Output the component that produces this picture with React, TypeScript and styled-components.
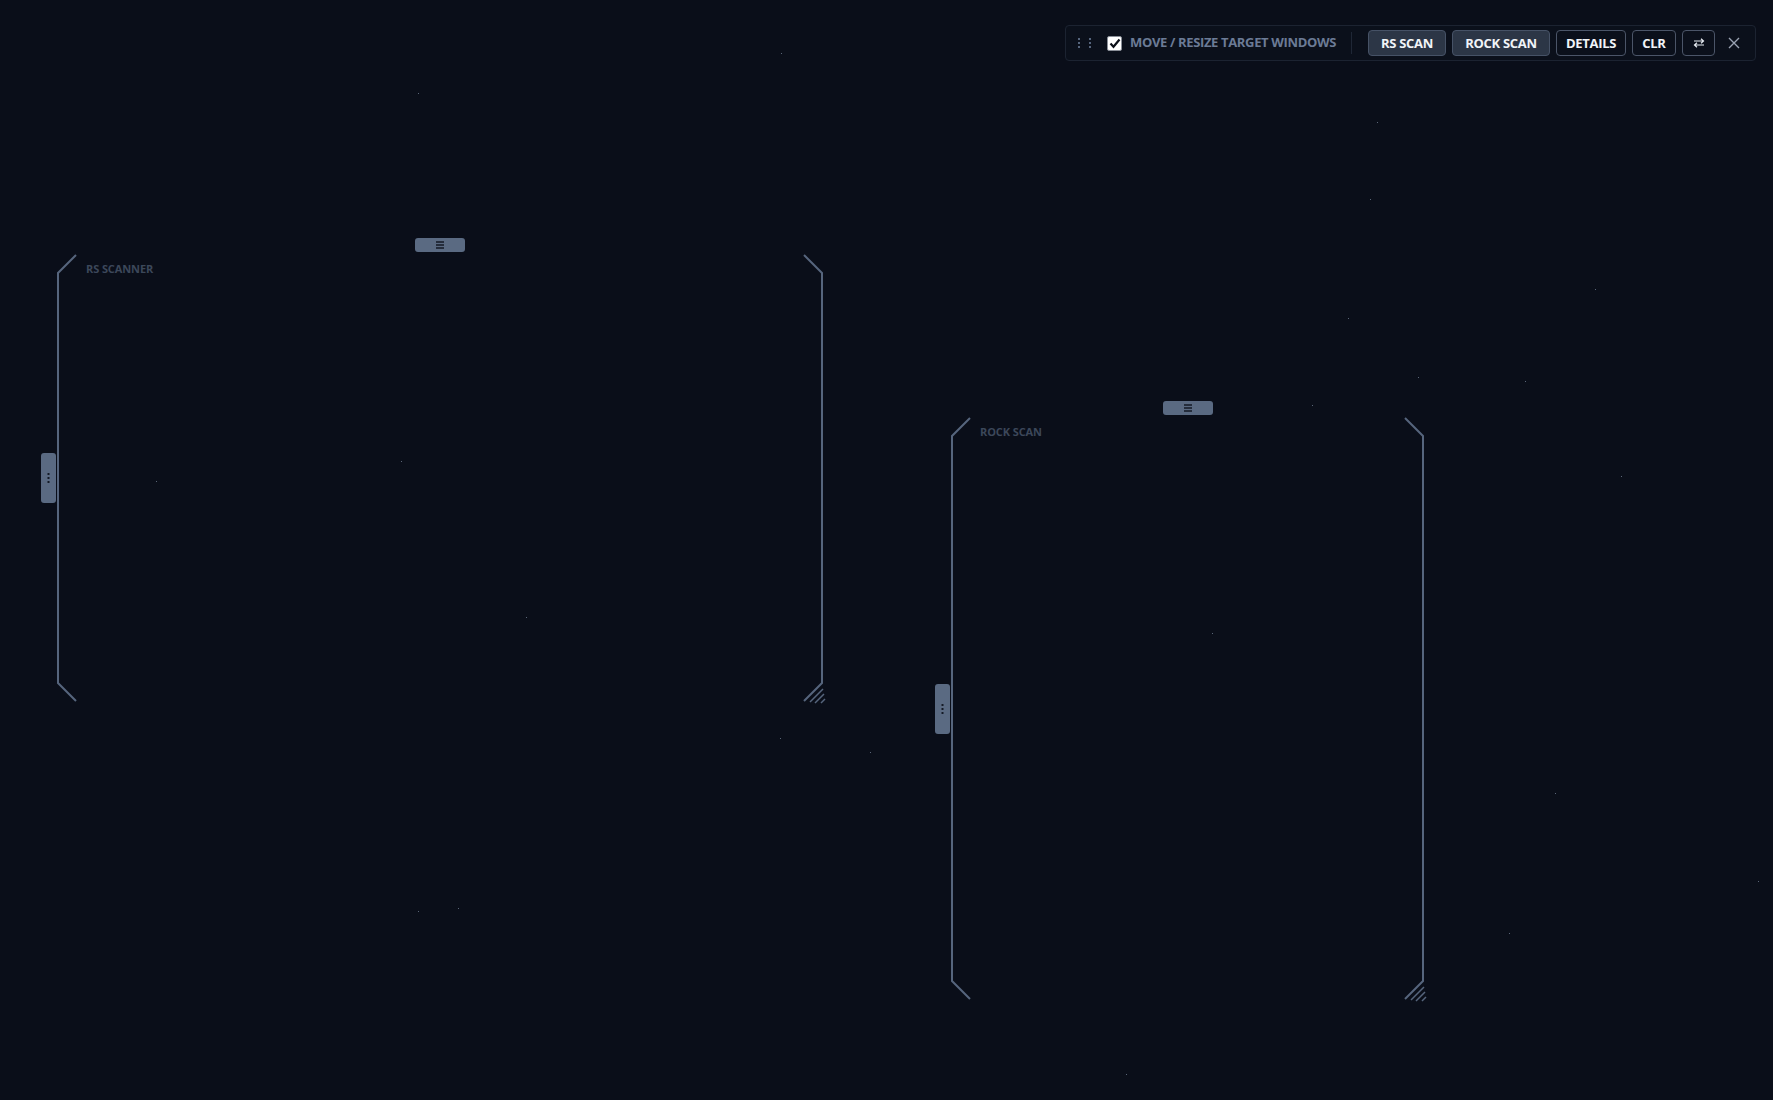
import React from "react";
import styled, { createGlobalStyle } from "styled-components";

const GlobalStyle = createGlobalStyle`
    html, body {
        margin: 0;
        padding: 0;
        background: #0a0e19;
        overflow: hidden;
    }
    #root {
        height: 100vh;
    }
`;

const stars = [
    [781, 53], [418, 93], [1377, 122], [1370, 199], [1595, 289], [1348, 318],
    [1418, 377], [1525, 381], [1312, 405], [401, 461], [156, 481], [1621, 476],
    [526, 617], [1212, 633], [780, 738], [870, 752], [1555, 793], [1758, 881],
    [418, 911], [458, 908], [1509, 933], [1126, 1074],
];

const windows = [
    { id: 1, title: "RS SCANNER", x: 58, y: 255, w: 764, h: 446 },
    { id: 2, title: "ROCK SCAN", x: 952, y: 418, w: 471, h: 581 },
];

const buttons = [
    { id: 1, label: "RS SCAN", active: true, width: 78 },
    { id: 2, label: "ROCK SCAN", active: true, width: 98 },
    { id: 3, label: "DETAILS", active: false, width: 70 },
    { id: 4, label: "CLR", active: false, width: 44 },
];

const Bracket = ({ w, h }: { w: number; h: number }) => (
    <BracketSvg width={w} height={h}>
        <path
            d={`M18 0 L0 18 L0 ${h - 18} L18 ${h} M${w - 18} 0 L${w} 18 L${w} ${h - 18} L${w - 18} ${h}`}
            fill="none"
            stroke="#56657d"
            strokeWidth="2"
        />
        <path
            d={`M${w + 1} ${h - 12} L${w - 12} ${h + 1} M${w + 2} ${h - 7} L${w - 7} ${h + 2} M${w + 3} ${h - 2} L${w - 1} ${h + 2}`}
            fill="none"
            stroke="#56657d"
            strokeWidth="1.5"
        />
    </BracketSvg>
);

const App = () => {
    return (
        <Screen>
            <GlobalStyle />
            {stars.map(([x, y], i) => (
                <Star key={i} style={{ left: x, top: y }} />
            ))}

            {windows.map((win) => (
                <ScanWindow
                    key={win.id}
                    style={{ left: win.x, top: win.y, width: win.w, height: win.h }}
                >
                    <Bracket w={win.w} h={win.h} />
                    <TopHandle>
                        <svg width="10" height="8" viewBox="0 0 10 8">
                            <path d="M1 1H9M1 4H9M1 7H9" stroke="#141a26" strokeWidth="1.3" />
                        </svg>
                    </TopHandle>
                    <SideHandle>
                        <svg width="3" height="10" viewBox="0 0 3 10">
                            <rect x="0.5" y="0" width="2" height="2" fill="#141a26" />
                            <rect x="0.5" y="4" width="2" height="2" fill="#141a26" />
                            <rect x="0.5" y="8" width="2" height="2" fill="#141a26" />
                        </svg>
                    </SideHandle>
                    <WindowTitle>{win.title}</WindowTitle>
                </ScanWindow>
            ))}

            <Toolbar>
                <Grip>
                    {Array.from({ length: 6 }).map((_, i) => (
                        <GripDot key={i} />
                    ))}
                </Grip>
                <CheckBox>
                    <svg width="12" height="11" viewBox="0 0 12 11">
                        <path d="M1.5 5.5 L4.5 8.8 L10.5 1.5" fill="none" stroke="#0b0f18" strokeWidth="2.2" />
                    </svg>
                </CheckBox>
                <ToggleLabel>MOVE / RESIZE TARGET WINDOWS</ToggleLabel>
                <Divider />
                <ButtonRow>
                    {buttons.map((b) => (
                        <ToolButton key={b.id} $active={b.active} $width={b.width} type="button">
                            {b.label}
                        </ToolButton>
                    ))}
                    <ToolButton $active={false} $width={33} type="button">
                        <svg width="12" height="10" viewBox="0 0 12 10">
                            <path
                                d="M1 3H10.5M8 0.8L10.5 3L8 5.2M11 7H1.5M4 4.8L1.5 7L4 9.2"
                                fill="none"
                                stroke="#e6ebf2"
                                strokeWidth="1.2"
                            />
                        </svg>
                    </ToolButton>
                </ButtonRow>
                <CloseBtn type="button">
                    <svg width="12" height="12" viewBox="0 0 12 12">
                        <path d="M1 1L11 11M11 1L1 11" stroke="#9aa3b3" strokeWidth="1.4" />
                    </svg>
                </CloseBtn>
            </Toolbar>
        </Screen>
    );
};

export default App;

const Screen = styled.div`
    position: relative;
    width: 100%;
    height: 100vh;
    background: #0a0e19;
    font-family: "Open Sans", "Noto Sans", sans-serif;
`;

const Star = styled.div`
    position: absolute;
    width: 1px;
    height: 1px;
    background: #5b6678;
`;

const ScanWindow = styled.div`
    position: absolute;
`;

const BracketSvg = styled.svg`
    position: absolute;
    left: 0;
    top: 0;
    overflow: visible;
`;

const TopHandle = styled.div`
    position: absolute;
    top: -17px;
    left: 50%;
    transform: translateX(-50%);
    width: 50px;
    height: 14px;
    border-radius: 3px;
    background: #5a6a82;
    display: flex;
    align-items: center;
    justify-content: center;
`;

const SideHandle = styled.div`
    position: absolute;
    left: -17px;
    top: 50%;
    transform: translateY(-50%);
    width: 15px;
    height: 50px;
    border-radius: 3px;
    background: #5a6a82;
    display: flex;
    align-items: center;
    justify-content: center;
`;

const WindowTitle = styled.div`
    position: absolute;
    left: 28px;
    top: 6px;
    font-size: 11px;
    font-weight: 700;
    color: #3c475a;
    letter-spacing: -0.1px;
`;

const Toolbar = styled.div`
    position: absolute;
    top: 25px;
    right: 17px;
    width: 691px;
    height: 36px;
    box-sizing: border-box;
    display: flex;
    align-items: center;
    padding: 0 15px 0 12px;
    background: #0b101b;
    border: 1px solid #1c2331;
    border-radius: 4px;
`;

const Grip = styled.div`
    display: grid;
    grid-template-columns: repeat(2, 2px);
    grid-template-rows: repeat(3, 2px);
    grid-auto-flow: column;
    column-gap: 9px;
    row-gap: 2px;
    margin-right: 16px;
`;

const GripDot = styled.span`
    width: 2px;
    height: 2px;
    background: #56657d;
`;

const CheckBox = styled.div`
    width: 15px;
    height: 15px;
    box-sizing: border-box;
    background: #ffffff;
    border: 1px solid #8a8f98;
    border-radius: 2px;
    display: flex;
    align-items: center;
    justify-content: center;
    margin-right: 8px;
`;

const ToggleLabel = styled.span`
    font-size: 13px;
    font-weight: 700;
    color: #6b7b96;
    letter-spacing: -0.35px;
    margin-top: -3px;
    white-space: nowrap;
`;

const Divider = styled.div`
    width: 1px;
    height: 22px;
    background: #1f2736;
    margin: 0 16px 0 15px;
`;

const ButtonRow = styled.div`
    display: flex;
    align-items: center;
    gap: 6px;
`;

const ToolButton = styled.button<{ $active: boolean; $width: number }>`
    width: ${(p) => p.$width}px;
    height: 26px;
    box-sizing: border-box;
    padding: 0;
    display: flex;
    align-items: center;
    justify-content: center;
    font-family: "Open Sans", "Noto Sans", sans-serif;
    font-size: 13px;
    font-weight: 700;
    letter-spacing: -0.3px;
    color: #f1f4f8;
    background: ${(p) => (p.$active ? "#2c3646" : "transparent")};
    border: 1px solid ${(p) => (p.$active ? "#465266" : "#4b5568")};
    border-radius: 4px;
    cursor: pointer;
`;

const CloseBtn = styled.button`
    margin-left: auto;
    background: none;
    border: none;
    padding: 0;
    display: flex;
    align-items: center;
    cursor: pointer;
`;
